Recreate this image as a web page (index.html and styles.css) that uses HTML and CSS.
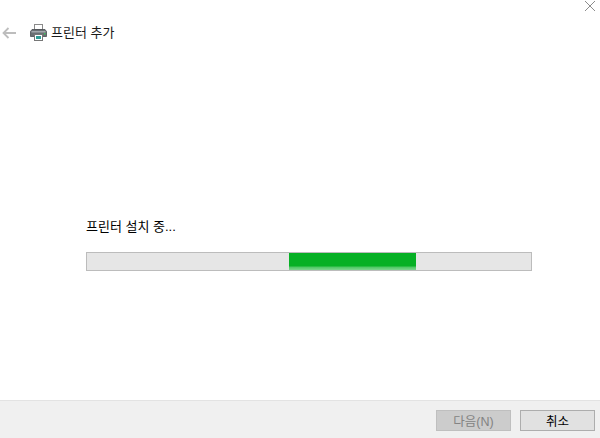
FILE: index.html
```html
<!DOCTYPE html>
<html lang="ko">
<head>
  <meta charset="UTF-8">
  <title>프린터 추가</title>
  <link rel="stylesheet" href="styles.css">
</head>
<body>
  <div class="Window">
    <div class="TitleBar">
      <svg class="closeIcon" width="10" height="10" viewBox="0 0 10 10">
        <path d="M0 0L10 10M10 0L0 10" stroke="#8c8c8c" stroke-width="1" fill="none"/>
      </svg>
    </div>
    <header class="Head">
      <svg class="backIcon" width="14" height="12" viewBox="0 0 14 12">
        <path d="M6.5 1L1.5 6L6.5 11M1.5 6H14" stroke="#bdbdbd" stroke-width="1.8" fill="none"/>
      </svg>
      <svg class="printerIcon" width="17" height="17" viewBox="0 0 17 17">
        <rect x="4.5" y="0.5" width="8" height="5" fill="#fff" stroke="#8a8a8a"/>
        <path d="M2 5.5H15L16.5 7.5V12.5H0.5V7.5Z" fill="#6a6f73" stroke="#4a4e52" stroke-width="0.8"/>
        <rect x="1.5" y="7" width="14" height="1.5" fill="#a3a8ac"/>
        <rect x="14" y="9" width="1.5" height="1.5" fill="#3fbf5a"/>
        <rect x="4.5" y="10.5" width="8" height="6" fill="#fff" stroke="#777"/>
        <rect x="6" y="12" width="5" height="3" fill="#2f9c95"/>
      </svg>
      <h1 class="headTitle">프린터 추가</h1>
    </header>
    <main class="Content">
      <p class="status">프린터 설치 중...</p>
      <div class="progress">
        <div class="progressFill"></div>
      </div>
    </main>
    <footer class="Bottom">
      <button class="btn btnOff" type="button" disabled>다음(N)</button>
      <button class="btn" type="button">취소</button>
    </footer>
  </div>
</body>
</html>
```

FILE: styles.css
```css
html, body {
  margin: 0;
  padding: 0;
}

body {
  width: 600px;
  height: 438px;
  overflow: hidden;
  background-color: #fff;
  font-family: "Liberation Sans", "Noto Sans CJK KR", sans-serif;
  font-size: 13px;
  color: #000;
}

.Window {
  display: flex;
  flex-direction: column;
  height: 438px;
}

.TitleBar {
  display: flex;
  justify-content: flex-end;
  height: 22px;
  padding: 1px 5px 0 0;
  box-sizing: border-box;
}

.closeIcon {
  display: block;
}

.Head {
  display: flex;
  align-items: center;
  height: 21px;
}

.backIcon {
  margin-left: 2px;
}

.printerIcon {
  margin-left: 14px;
}

.headTitle {
  margin: 0 0 2px 4px;
  font-size: 13px;
  font-weight: normal;
  color: #1a1a1a;
}

.Content {
  flex: 1;
  padding: 175px 68px 0 86px;
}

.status {
  margin: 0 0 17px 0;
  height: 17px;
  line-height: 17px;
}

.progress {
  height: 19px;
  box-sizing: border-box;
  border: 1px solid #bcbcbc;
  background-color: #e6e6e6;
  padding-left: 202px;
}

.progressFill {
  width: 127px;
  height: 17px;
  background: linear-gradient(to bottom, #06b025 0, #06b025 13px, #4cc763 14px, #7ed58f 17px);
}

.Bottom {
  display: flex;
  justify-content: flex-end;
  gap: 9px;
  height: 38px;
  padding: 9px 5px 0 0;
  box-sizing: border-box;
  background-color: #f0f0f0;
  border-top: 1px solid #e3e3e3;
}

.btn {
  width: 75px;
  height: 21px;
  padding: 0;
  box-sizing: border-box;
  border: 1px solid #adadad;
  background-color: #e1e1e1;
  font-family: inherit;
  font-size: 12.5px;
  color: #000;
}

.btnOff {
  border-color: #bfbfbf;
  background-color: #cccccc;
  color: #838383;
}
```
